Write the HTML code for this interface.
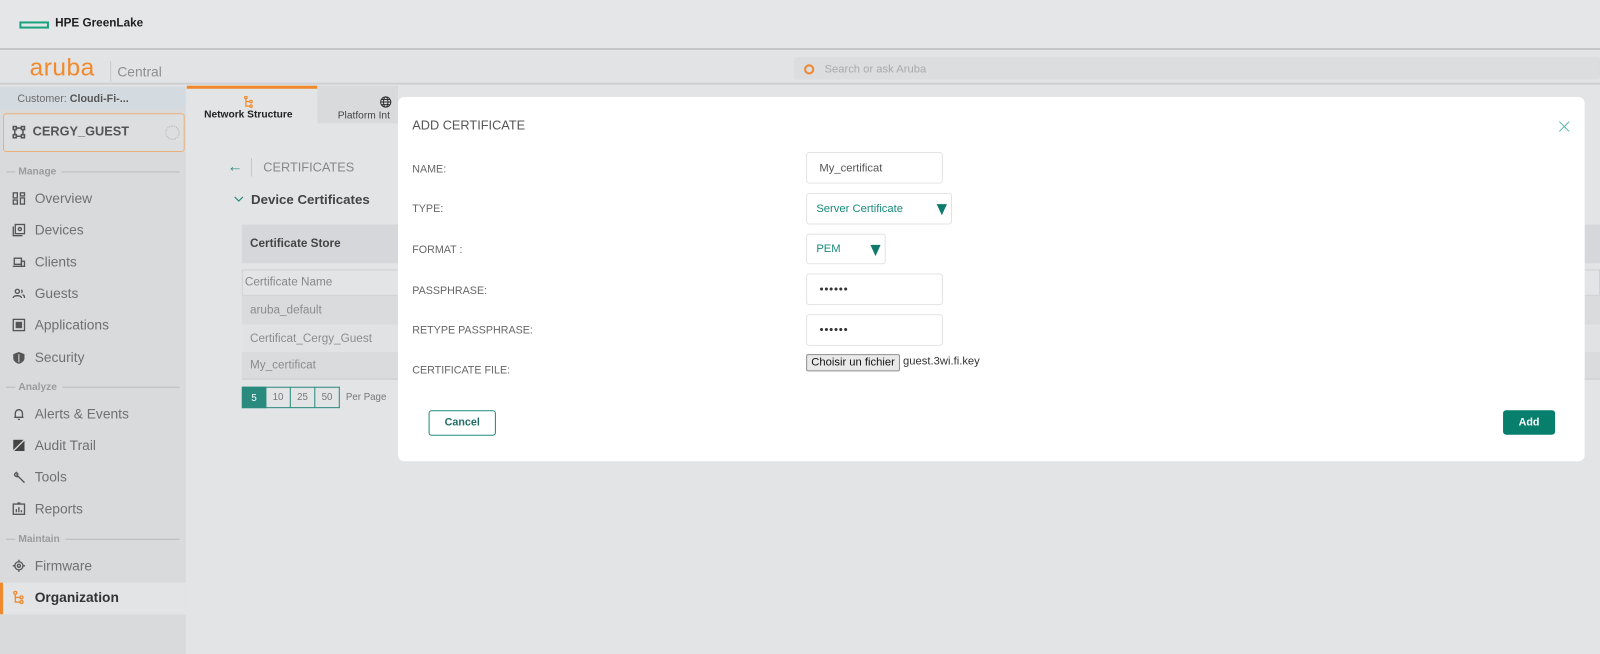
<!DOCTYPE html>
<html><head><meta charset="utf-8"><style>
*{box-sizing:border-box;margin:0;padding:0}
html,body{width:1600px;height:641px;overflow:hidden;background:#e3e4e6}
#w{position:absolute;left:0;top:0;width:1568px;height:629px;transform:scale(1.0204);transform-origin:0 0;font-family:"Liberation Sans",sans-serif;color:#6b6c6e}
.abs{position:absolute}
.nav{position:absolute;left:12px;font-size:13.5px;color:#6f7072;display:flex;align-items:center}
.nav svg{width:13px;height:13px;margin-right:9px}
.sec{position:absolute;left:6px;width:170px;font-size:10px;font-weight:bold;color:#9a9b9d;display:flex;align-items:center}
.sec:before{content:"";width:9px;border-top:1px solid #b9babc;margin-right:3px}
.sec:after{content:"";flex:1;border-top:1px solid #b9babc;margin-left:5px}
.lbl{position:absolute;left:14px;font-size:10.5px;color:#666}
.inp{position:absolute;left:400px;border:1px solid #e2e3e5;border-radius:3px;background:#fff;font-size:11px;display:flex;align-items:center;padding-left:12px}
.tri{position:absolute;right:4px;top:10px;width:0;height:0;border-left:5px solid transparent;border-right:5px solid transparent;border-top:11px solid #0d7a6b}
.row{position:absolute;left:237px;width:1331px;font-size:11.5px;color:#8b8c8e;padding-left:8px;display:flex;align-items:center}
.dots{font-size:7px;letter-spacing:0.5px}
</style></head><body><div id="w">
<div class="abs" style="left:0;top:0;width:1568px;height:49px;background:#e5e6e8;border-bottom:2px solid #c5c6c8"></div>
<div class="abs" style="left:19px;top:21px;width:29px;height:7px;border:2px solid #1aa37f"></div>
<div class="abs" style="left:54px;top:17px;font-size:11.5px;font-weight:bold;color:#1f1f1f">HPE GreenLake</div>
<div class="abs" style="left:0;top:51px;width:1568px;height:32px;background:#e2e3e5;border-bottom:2px solid #cfd0d2"></div>
<div class="abs" style="left:29px;top:53px;font-size:24px;color:#f08a2c;letter-spacing:0.5px;line-height:28px">aruba</div>
<div class="abs" style="left:108px;top:60px;height:20px;border-left:1px solid #c8c9cb"></div>
<div class="abs" style="left:115px;top:63px;font-size:13.5px;color:#8e8f91">Central</div>
<div class="abs" style="left:778px;top:56px;width:790px;height:22px;background:#dcdddf;border-radius:3px"></div>
<div class="abs" style="left:788px;top:63px;width:10px;height:10px;border:2.5px solid #ee8a36;border-radius:50%"></div>
<div class="abs" style="left:808px;top:62px;font-size:11px;color:#a9aaac">Search or ask Aruba</div>
<div class="abs" style="left:0;top:85px;width:182px;height:556px;background:#d9dadc"></div>
<div class="abs" style="left:0;top:85px;width:182px;height:22px;background:#d4dbe0;font-size:10.5px;color:#6a6b6d;padding:6px 0 0 17px">Customer: <b style="color:#555">Cloudi-Fi-...</b></div>
<div class="abs" style="left:3px;top:111px;width:178px;height:38px;border:1px solid #ebb07a;border-radius:3px;background:#dddee0"></div>
<svg class="abs" style="left:12px;top:123px" width="13" height="13" viewBox="0 0 13 13" fill="none" stroke="#555" stroke-width="1.5"><rect x="1" y="1" width="3" height="3"/><rect x="9" y="1" width="3" height="3"/><rect x="1" y="9" width="3" height="3"/><rect x="9" y="9" width="3" height="3"/><path d="M4 2.5h5M4 10.5h5M2.5 4v5M10.5 4v5"/></svg>
<div class="abs" style="left:32px;top:122px;font-size:12.5px;font-weight:bold;color:#555">CERGY_GUEST</div>
<div class="abs" style="left:162px;top:123px;width:14px;height:14px;border:1.5px dotted #b0b1b3;border-radius:50%"></div>
<div class="sec" style="top:163px">Manage</div>
<div class="nav" style="top:187px"><svg viewBox="0 0 13 13" fill="none" stroke="#555" stroke-width="1.3"><rect x="1" y="1" width="4" height="5"/><rect x="8" y="1" width="4" height="3"/><rect x="1" y="8" width="4" height="4"/><rect x="8" y="6" width="4" height="6"/></svg>Overview</div>
<div class="nav" style="top:218px"><svg viewBox="0 0 13 13" fill="none" stroke="#555" stroke-width="1.3"><rect x="3" y="1" width="9" height="9"/><path d="M1 3v9h9"/><circle cx="7.5" cy="5.5" r="1.5"/></svg>Devices</div>
<div class="nav" style="top:249px"><svg viewBox="0 0 13 13" fill="none" stroke="#555" stroke-width="1.3"><path d="M2 3h7v6H2zM0.5 11h9"/><rect x="9" y="6" width="3" height="5"/></svg>Clients</div>
<div class="nav" style="top:280px"><svg viewBox="0 0 13 13" fill="none" stroke="#555" stroke-width="1.3"><circle cx="5" cy="4.5" r="2"/><path d="M1 11c0-3 8-3 8 0M9 3a2 2 0 010 3M10 8c1.5 0 2 1.5 2 3"/></svg>Guests</div>
<div class="nav" style="top:311px"><svg viewBox="0 0 13 13" fill="none" stroke="#555" stroke-width="1.3"><rect x="1" y="1" width="11" height="11"/><rect x="4" y="4" width="5" height="5" fill="#555"/></svg>Applications</div>
<div class="nav" style="top:343px"><svg viewBox="0 0 13 13"><path d="M6.5 1L12 3v4c0 3-3 5-5.5 5.5C4 12 1 10 1 7V3z" fill="#555"/><path d="M6.5 3v8" stroke="#d9dadc"/></svg>Security</div>
<div class="sec" style="top:374px">Analyze</div>
<div class="nav" style="top:398px"><svg viewBox="0 0 13 13" fill="none" stroke="#555" stroke-width="1.3"><path d="M3 10V6a3.5 3.5 0 017 0v4zM2 10h9M5.5 12h2"/></svg>Alerts &amp; Events</div>
<div class="nav" style="top:429px"><svg viewBox="0 0 13 13"><rect x="1" y="1" width="11" height="11" fill="#444"/><path d="M1 12L12 1" stroke="#d9dadc" stroke-width="1.3"/></svg>Audit Trail</div>
<div class="nav" style="top:460px"><svg viewBox="0 0 13 13" fill="none" stroke="#555" stroke-width="1.3"><path d="M2 4a3 3 0 004 2l6 6M2 4l2-2 2 2M6 6l-2-2"/></svg>Tools</div>
<div class="nav" style="top:491px"><svg viewBox="0 0 13 13" fill="none" stroke="#555" stroke-width="1.3"><rect x="1" y="2" width="11" height="10"/><path d="M4 10V7M6.5 10V5M9 10V8M5 1h3"/></svg>Reports</div>
<div class="sec" style="top:523px">Maintain</div>
<div class="nav" style="top:547px"><svg viewBox="0 0 13 13" fill="none" stroke="#555" stroke-width="1.3"><circle cx="6.5" cy="6.5" r="4"/><circle cx="6.5" cy="6.5" r="1.5"/><path d="M6.5 0.5v2M6.5 10.5v2M0.5 6.5h2M10.5 6.5h2"/></svg>Firmware</div>
<div class="abs" style="left:0;top:571px;width:182px;height:31px;background:#e3e4e6;border-left:3px solid #f08a2c"></div>
<div class="nav" style="top:578px;font-weight:bold;color:#333"><svg viewBox="0 0 13 13" fill="none" stroke="#f08a2c" stroke-width="1.3"><circle cx="3" cy="2" r="1.5"/><circle cx="9" cy="6.5" r="1.5"/><circle cx="9" cy="11" r="1.5"/><path d="M3 3.5V11h4.5M3 6.5h4.5"/></svg>Organization</div>
<div class="abs" style="left:183px;top:84px;width:128px;height:37px;background:#e3e4e6;border-top:3px solid #f08a2c"></div>
<svg class="abs" style="left:239px;top:94px" width="9" height="12" viewBox="0 0 9 12" fill="none" stroke="#f08a2c" stroke-width="1.2"><circle cx="2" cy="1.5" r="1.2"/><circle cx="7" cy="5.5" r="1.2"/><circle cx="7" cy="10" r="1.2"/><path d="M2 3v7h4M2 5.5h4"/></svg>
<div class="abs" style="left:200px;top:107px;font-size:10px;font-weight:bold;color:#222">Network Structure</div>
<div class="abs" style="left:311px;top:84px;width:79px;height:37px;background:#d9dadc"></div>
<svg class="abs" style="left:372px;top:94px" width="12" height="12" viewBox="0 0 12 12" fill="none" stroke="#333" stroke-width="1"><circle cx="6" cy="6" r="5"/><ellipse cx="6" cy="6" rx="2.2" ry="5"/><path d="M1 6h10M2 3.5h8M2 8.5h8"/></svg>
<div class="abs" style="left:331px;top:108px;font-size:10px;color:#444">Platform Int</div>
<div class="abs" style="left:223px;top:155px;font-size:15px;color:#2b8a7e">&#8592;</div>
<div class="abs" style="left:246px;top:155px;height:18px;border-left:1px solid #c5c6c8"></div>
<div class="abs" style="left:258px;top:157px;font-size:12.5px;color:#888">CERTIFICATES</div>
<svg class="abs" style="left:229px;top:192px" width="10" height="6" viewBox="0 0 10 6" fill="none" stroke="#2b8a7e" stroke-width="1.2"><path d="M1 1l4 4 4-4"/></svg>
<div class="abs" style="left:246px;top:188px;font-size:13px;font-weight:bold;color:#444">Device Certificates</div>
<div class="row" style="top:220px;height:38px;background:#d6d7da;font-weight:bold;color:#444">Certificate Store</div>
<div class="row" style="top:264px;height:26px;background:#e3e4e6;border:1px solid #d0d1d3;padding-left:2px;color:#888">Certificate Name</div>
<div class="row" style="top:290px;height:28px;background:#dadbdd">aruba_default</div>
<div class="row" style="top:318px;height:27px;background:#e1e2e4">Certificat_Cergy_Guest</div>
<div class="row" style="top:345px;height:27px;background:#dadbdd;border-bottom:1px solid #ccc">My_certificat</div>
<div class="abs" style="left:237px;top:379px;display:flex;font-size:9.5px">
<div style="width:24px;height:21px;background:#2b8a7e;color:#fff;text-align:center;line-height:21px;border:1px solid #2b8a7e">5</div>
<div style="width:24px;height:21px;border:1px solid #2b8a7e;border-left:none;text-align:center;line-height:19px;color:#777">10</div>
<div style="width:24px;height:21px;border:1px solid #2b8a7e;border-left:none;text-align:center;line-height:19px;color:#777">25</div>
<div style="width:24px;height:21px;border:1px solid #2b8a7e;border-left:none;text-align:center;line-height:19px;color:#777">50</div>
<div style="margin-left:6px;line-height:21px;color:#777">Per Page</div></div>
<div class="abs" style="left:390px;top:95px;width:1163px;height:357px;background:#fff;border-radius:6px">
<div class="abs" style="left:14px;top:21px;font-size:12.5px;color:#555">ADD CERTIFICATE</div>
<svg class="abs" style="left:1138px;top:24px" width="10" height="10" viewBox="0 0 10 10" stroke="#5ab8ad" stroke-width="1"><path d="M0 0l10 10M10 0L0 10"/></svg>
<div class="lbl" style="top:65px">NAME:</div>
<div class="lbl" style="top:104px">TYPE:</div>
<div class="lbl" style="top:144px">FORMAT :</div>
<div class="lbl" style="top:184px">PASSPHRASE:</div>
<div class="lbl" style="top:223px">RETYPE PASSPHRASE:</div>
<div class="lbl" style="top:262px">CERTIFICATE FILE:</div>
<div class="inp" style="top:54px;width:134px;height:31px;color:#555">My_certificat</div>
<div class="inp" style="top:94px;width:143px;height:31px;color:#1a8a7a;padding-left:9px">Server Certificate<div class="tri"></div></div>
<div class="inp" style="top:134px;width:78px;height:30px;color:#1a8a7a;padding-left:9px">PEM<div class="tri"></div></div>
<div class="inp dots" style="top:173px;width:134px;height:31px;color:#333">●●●●●●</div>
<div class="inp dots" style="top:213px;width:134px;height:31px;color:#333">●●●●●●</div>
<div class="abs" style="left:400px;top:252px;width:92px;height:17px;background:#e9e9e9;border:1px solid #8f8f8f;border-radius:2px;font-size:11px;color:#111;text-align:center;line-height:15px">Choisir un fichier</div>
<div class="abs" style="left:495px;top:253px;font-size:11px;color:#333">guest.3wi.fi.key</div>
<div class="abs" style="left:30px;top:307px;width:66px;height:25px;border:1.5px solid #1f8a7c;border-radius:3px;font-size:10.5px;font-weight:bold;color:#1f6f66;text-align:center;line-height:22px">Cancel</div>
<div class="abs" style="left:1083px;top:307px;width:51px;height:24px;background:#087e6c;border-radius:3px;font-size:10.5px;font-weight:bold;color:#fff;text-align:center;line-height:24px">Add</div>
</div>
</div></body></html>
